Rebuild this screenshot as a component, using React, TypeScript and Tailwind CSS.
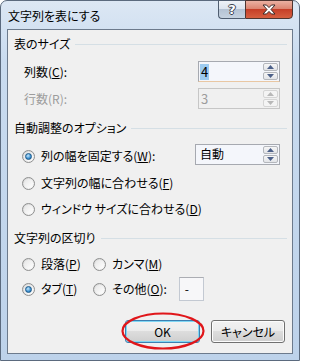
import React from 'react';

const font = "font-['Noto_Sans_CJK_JP','Noto_Sans',sans-serif] [font-feature-settings:'palt']";

const GroupHeader: React.FC<{ label: string; className?: string }> = ({ label, className }) => (
  <div className={`flex h-[16px] items-center pl-[6px] pr-[5px] ${className ?? ''}`}>
    <span className="leading-[16px]">{label}</span>
    <div className="ml-[5px] h-px flex-1 bg-[#d5dfe5]" />
  </div>
);

const Radio: React.FC<{ checked?: boolean }> = ({ checked }) => (
  <div className="flex h-[13px] w-[13px] shrink-0 items-center justify-center rounded-full border border-[#8e8f8f] bg-[linear-gradient(135deg,#d4d4d4,#fbfbfb)]">
    <div className="flex h-[9px] w-[9px] items-center justify-center rounded-full bg-[linear-gradient(135deg,#e6e6e6,#ffffff)]">
      {checked && (
        <div className="h-[7px] w-[7px] rounded-full border border-[#1d5a8a] bg-[radial-gradient(circle_at_40%_35%,#c6e8fc,#3a8fd0_60%,#1d5a8a)]" />
      )}
    </div>
  </div>
);

const Arrow: React.FC<{ up?: boolean; disabled?: boolean }> = ({ up, disabled }) => (
  <svg width="7" height="4" viewBox="0 0 7 4">
    <polygon points={up ? '0,4 7,4 3.5,0' : '0,0 7,0 3.5,4'} fill={disabled ? '#b8b8b8' : '#4c6089'} />
  </svg>
);

const Spin: React.FC<{ w: string; disabled?: boolean; children: React.ReactNode; focused?: boolean }> = ({ w, disabled, children, focused }) => (
  <div
    className={`flex h-[21px] ${w} items-stretch border ${
      disabled ? 'border-[#c6c6c6] bg-[#f0f0f0] text-[#9c9c9c]' : 'border-[#a6a9b0] bg-[#f4f6fb]'
    } ${focused ? 'border-b-[#e9c7a3]' : ''}`}
  >
    <div className="flex flex-1 items-center pl-px">{children}</div>
    <div className="flex w-[16px] flex-col gap-px py-px pr-px">
      {[true, false].map((up) => (
        <div
          key={String(up)}
          className={`flex flex-1 items-center justify-center rounded-[2px] border ${
            disabled ? 'border-[#d5d5d5] bg-[#f4f4f4]' : 'border-[#b4b7bc] bg-[linear-gradient(#f6f6f6,#e2e4e8)]'
          }`}
        >
          <Arrow up={up} disabled={disabled} />
        </div>
      ))}
    </div>
  </div>
);

const Button: React.FC<{ w: string; isDefault?: boolean; children: React.ReactNode }> = ({ w, isDefault, children }) => (
  <div
    className={`flex h-[23px] ${w} items-center justify-center rounded-[3px] border ${
      isDefault
        ? 'border-[#3c7fb1] shadow-[inset_0_0_0_1px_#7fd6f4]'
        : 'border-[#707070] shadow-[inset_0_0_0_1px_#fcfcfc]'
    } bg-[linear-gradient(#f2f2f2_0%,#ebebeb_50%,#dddddd_50%,#cfcfcf_100%)] leading-none`}
  >
    {children}
  </div>
);

const outline = '[text-shadow:1px_0_0_#3a4250,-1px_0_0_#3a4250,0_1px_0_#3a4250,0_-1px_0_#3a4250]';

export default function App() {
  return (
    <div className={`${font} text-[12px] text-black`}>
      <div className="flex h-[361px] w-[300px] flex-col rounded-t-[7px] border border-[#5b6a7e] bg-[linear-gradient(to_bottom,#dce7f4,#c9dbef_60px,#bdd2ea)] px-[6px] pb-[6px]">
        {/* title bar */}
        <div className="flex h-[28px] shrink-0 items-start justify-between">
          <span className="mt-[7px] pl-px leading-[16px]">文字列を表にする</span>
          <div className="-mt-px flex">
            <div
              className={`flex h-[19px] w-[27px] items-center justify-center rounded-bl-[4px] border border-r-0 border-[#4f5d70] bg-[linear-gradient(#eef2f7,#dde5ef_45%,#b5c3d4_50%,#c6d2e0)] font-['DejaVu_Sans',sans-serif] text-[13px] font-bold leading-none text-white ${outline}`}
            >
              ?
            </div>
            <div className="flex h-[19px] w-[48px] items-center justify-center rounded-br-[4px] border border-[#4f3530] bg-[linear-gradient(#ebb1a2,#dc8672_45%,#c63f28_50%,#d65f40)]">
              <svg width="14" height="11" viewBox="0 0 14 11">
                <polygon
                  points="1,1 4.5,1 7,3.6 9.5,1 13,1 9,5.5 13,10 9.5,10 7,7.4 4.5,10 1,10 5,5.5"
                  fill="#ffffff"
                  stroke="#3b2a28"
                  strokeWidth="1"
                  strokeLinejoin="round"
                />
              </svg>
            </div>
          </div>
        </div>

        {/* client area */}
        <div className="flex flex-1 flex-col border border-[#6c7a8c] bg-[#f0f0f0] pt-[6px]">
          <GroupHeader label="表のサイズ" />

          <div className="mt-[9px] flex h-[21px] items-center justify-between pl-[16px] pr-[12px]">
            <span className="leading-[16px]">
              列数(<u>C</u>):
            </span>
            <Spin w="w-[82px]" focused>
              <span className="bg-[#9ccbf0] px-px text-[13px] leading-[16px]">4</span>
            </Spin>
          </div>

          <div className="mt-[6px] flex h-[21px] items-center justify-between pl-[16px] pr-[12px]">
            <span className="leading-[16px] text-[#9c9c9c]">行数(R):</span>
            <Spin w="w-[82px]" disabled>
              <span className="px-px text-[13px] leading-[16px]">3</span>
            </Spin>
          </div>

          <GroupHeader label="自動調整のオプション" className="mt-[11px]" />

          <div className="mt-[7px] flex h-[22px] items-center justify-between pl-[14px] pr-[12px]">
            <div className="flex items-center gap-[6px] pt-[4px]">
              <Radio checked />
              <span className="leading-[16px]">
                列の幅を固定する(<u>W</u>):
              </span>
            </div>
            <Spin w="w-[85px]">
              <span className="pl-[3px] leading-[16px]">自動</span>
            </Spin>
          </div>

          <div className="mt-[7px] flex h-[22px] items-center gap-[6px] pl-[14px]">
            <Radio />
            <span className="leading-[16px]">
              文字列の幅に合わせる(<u>F</u>)
            </span>
          </div>

          <div className="mt-[4px] flex h-[22px] items-center gap-[6px] pl-[14px]">
            <Radio />
            <span className="leading-[16px]">
              ウィンドウ サイズに合わせる(<u>D</u>)
            </span>
          </div>

          <GroupHeader label="文字列の区切り" className="mt-[10px]" />

          <div className="mt-[7px] flex h-[22px] items-center pl-[14px]">
            <div className="flex w-[71px] items-center gap-[6px]">
              <Radio />
              <span className="leading-[16px]">
                段落(<u>P</u>)
              </span>
            </div>
            <div className="flex items-center gap-[6px]">
              <Radio />
              <span className="leading-[16px]">
                カンマ(<u>M</u>)
              </span>
            </div>
          </div>

          <div className="mt-[2px] flex h-[24px] items-center pl-[14px]">
            <div className="flex w-[71px] items-center gap-[6px]">
              <Radio checked />
              <span className="leading-[16px]">
                タブ(<u>T</u>)
              </span>
            </div>
            <div className="flex items-center gap-[6px]">
              <Radio />
              <span className="leading-[16px]">
                その他(<u>O</u>):
              </span>
            </div>
            <div className="ml-[12px] flex h-[24px] w-[25px] items-center border border-[#c3c9d2] border-t-[#abadb3] bg-[#f7f7f9] pl-[5px] leading-[16px]">
              -
            </div>
          </div>

          <div className="mt-[19px] flex justify-end gap-[11px] pr-[7px]">
            <div className="relative">
              <Button w="w-[75px]" isDefault>
                OK
              </Button>
              <svg className="absolute -left-[4px] -top-[8px]" width="84" height="38" viewBox="0 0 84 38">
                <ellipse cx="42" cy="19" rx="40.5" ry="17.5" fill="none" stroke="#e0161a" strokeWidth="2.2" />
              </svg>
            </div>
            <Button w="w-[74px]">キャンセル</Button>
          </div>
        </div>
      </div>
    </div>
  );
}
